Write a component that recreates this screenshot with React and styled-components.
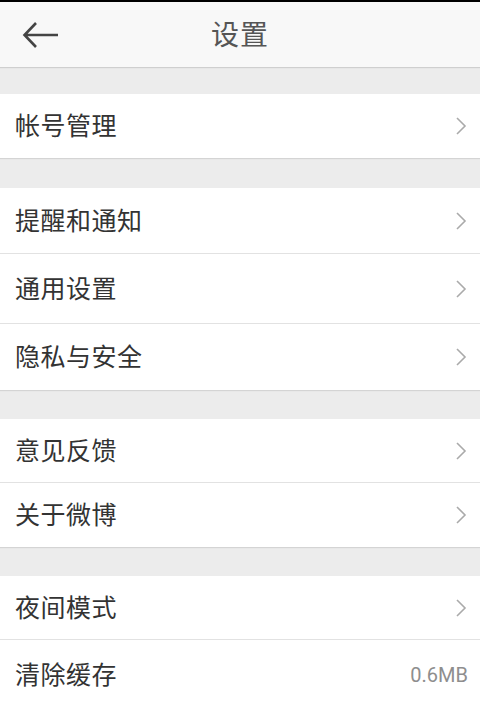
import React from "react";
import styled, { createGlobalStyle } from "styled-components";

const Global = createGlobalStyle`
  html, body { margin: 0; padding: 0; background: #ececec; }
  body { font-family: "Roboto", "Noto Sans CJK SC", sans-serif; }
`;

const Page = styled.div`
  width: 480px;
  height: 703px;
  overflow: hidden;
  background: #ececec;
  border-top: 2px solid #000;
  box-sizing: border-box;
`;

const Header = styled.header`
  height: 65px;
  background: #f8f8f8;
  display: grid;
  grid-template-columns: 80px 1fr 80px;
  align-items: center;
  box-shadow: 0 1px 1px rgba(0, 0, 0, 0.12);
  position: relative;
  z-index: 1;
`;

const Back = styled.div`
  display: flex;
  align-items: center;
  padding-left: 22px;
  height: 100%;
`;

const Title = styled.h1`
  margin: 0 0 4px;
  line-height: 1;
  text-align: center;
  font-size: 28px;
  font-weight: 400;
  color: #555;
  letter-spacing: 1px;
  font-family: "Noto Sans CJK SC", sans-serif;
`;

const Gap = styled.div`
  height: ${(p) => p.h}px;
  background: #ececec;
`;

const Group = styled.section`
  background: #fff;
  box-shadow: 0 1px 1px rgba(0, 0, 0, 0.1);
  position: relative;
`;

const Row = styled.div`
  height: ${(p) => p.h}px;
  display: flex;
  align-items: center;
  justify-content: space-between;
  padding: 0 13px 0 15px;
  border-top: ${(p) => (p.first ? "none" : "1px solid #e2e2e2")};
`;

const Label = styled.span`
  font-family: "Noto Sans CJK SC", sans-serif;
  font-size: 25px;
  line-height: 1;
  margin-bottom: 3px;
  color: #333;
  letter-spacing: 0.5px;
`;

const Value = styled.span`
  font-family: "Roboto", sans-serif;
  font-size: 20px;
  line-height: 1;
  color: #8e8e8e;
  margin-right: -1px;
`;

const Chevron = () => (
  <svg width="12" height="20" viewBox="0 0 12 20">
    <path d="M2 2 L10 10 L2 18" fill="none" stroke="#aaa" strokeWidth="1.6" />
  </svg>
);

const Arrow = () => (
  <svg width="38" height="30" viewBox="0 0 38 30">
    <path
      d="M36 15 H3 M14 3 L2.5 15 L14 27"
      fill="none"
      stroke="#444"
      strokeWidth="2.6"
    />
  </svg>
);

const groups = [
  { gap: 27, rows: [{ t: "帐号管理", h: 64 }] },
  {
    gap: 30,
    rows: [
      { t: "提醒和通知", h: 65 },
      { t: "通用设置", h: 69 },
      { t: "隐私与安全", h: 66 },
    ],
  },
  {
    gap: 29,
    rows: [
      { t: "意见反馈", h: 63 },
      { t: "关于微博", h: 64 },
    ],
  },
  {
    gap: 29,
    rows: [
      { t: "夜间模式", h: 63 },
      { t: "清除缓存", h: 69, v: "0.6MB" },
    ],
  },
];

export default function App() {
  return (
    <>
      <Global />
      <Page>
        <Header>
          <Back>
            <Arrow />
          </Back>
          <Title>设置</Title>
          <div />
        </Header>
        {groups.map((g, gi) => (
          <React.Fragment key={gi}>
            <Gap h={g.gap} />
            <Group>
              {g.rows.map((r, ri) => (
                <Row key={r.t} h={r.h} first={ri === 0}>
                  <Label>{r.t}</Label>
                  {r.v ? <Value>{r.v}</Value> : <Chevron />}
                </Row>
              ))}
            </Group>
          </React.Fragment>
        ))}
      </Page>
    </>
  );
}
